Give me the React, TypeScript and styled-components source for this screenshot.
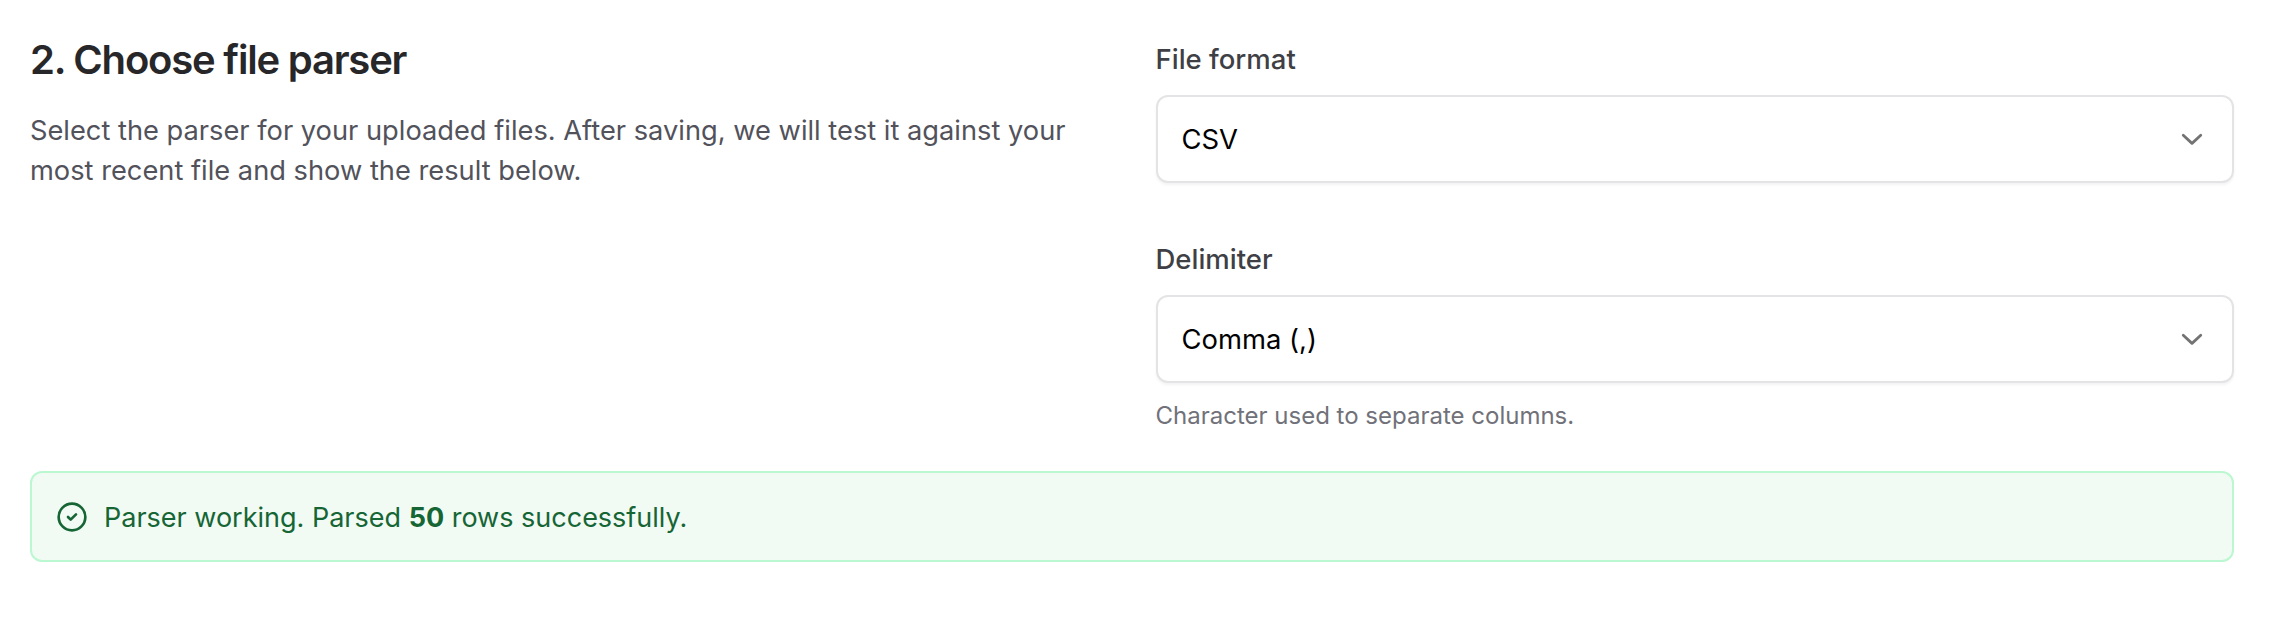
import React from 'react'
import styled, { createGlobalStyle } from 'styled-components'

const GlobalStyle = createGlobalStyle`
  html, body {
    margin: 0;
    background: #ffffff;
    font-family: Inter, "Liberation Sans", sans-serif;
  }
`

const Page = styled.div`
  padding: 40px 40px 0 30px;
  width: 2274px;
  height: 618px;
  box-sizing: border-box;
  overflow: hidden;
`

const Columns = styled.div`
  display: grid;
  grid-template-columns: 1fr 1fr;
  gap: 47px;
`

const Title = styled.h2`
  margin: 0 0 32px;
  padding-top: 1px;
  font-size: 40px;
  line-height: 38px;
  font-weight: 600;
  letter-spacing: -1.2px;
  color: #27272a;
`

const Description = styled.p`
  margin: 0;
  font-size: 27.25px;
  line-height: 40px;
  color: #52525b;
`

const Fields = styled.div`
  display: flex;
  flex-direction: column;
  gap: 57px;
`

const Field = styled.div`
  display: flex;
  flex-direction: column;
`

const Label = styled.label`
  font-size: 27.5px;
  line-height: 39px;
  font-weight: 500;
  color: #3f3f46;
  margin-bottom: 16px;
`

const Select = styled.div`
  display: flex;
  align-items: center;
  justify-content: space-between;
  height: 88px;
  box-sizing: border-box;
  padding: 0 25px 0 24px;
  border: 2px solid #e4e4e7;
  border-radius: 12px;
  box-shadow: 0 2px 3px rgba(0, 0, 0, 0.05);
  background: #ffffff;
  font-size: 27.4px;
  color: #000000;
`

const Hint = styled.p`
  margin: 17px 0 0;
  font-size: 24px;
  line-height: 32px;
  color: #71717a;
`

const Notice = styled.div`
  display: flex;
  align-items: center;
  gap: 16px;
  height: 91px;
  box-sizing: border-box;
  margin-top: 39px;
  padding: 0 24px;
  background: #f1fbf4;
  border: 2px solid #bbf7d0;
  border-radius: 12px;
  font-size: 27px;
  color: #166534;

  strong {
    font-weight: 700;
  }
`

const NoticeText = styled.span`
  padding-top: 1px;
`

const Chevron = () => (
  <svg width="30" height="30" viewBox="0 0 24 24" fill="none" stroke="#737373" strokeWidth="2.2" strokeLinecap="round" strokeLinejoin="round">
    <path d="m5 9 7 6.5 7-6.5" />
  </svg>
)

const CircleCheck = () => (
  <svg width="32" height="32" viewBox="0 0 24 24" fill="none" stroke="#166534" strokeWidth="2" strokeLinecap="round" strokeLinejoin="round">
    <circle cx="12" cy="12" r="10" />
    <path d="m9 12 2 2 4-4" />
  </svg>
)

export default function App() {
  return (
    <Page>
      <GlobalStyle />
      <Columns>
        <div>
          <Title>2. Choose file parser</Title>
          <Description>
            Select the parser for your uploaded files. After saving, we will test it against your most recent file and
            show the result below.
          </Description>
        </div>
        <Fields>
          <Field>
            <Label>File format</Label>
            <Select>
              CSV
              <Chevron />
            </Select>
          </Field>
          <Field>
            <Label>Delimiter</Label>
            <Select>
              Comma (,)
              <Chevron />
            </Select>
            <Hint>Character used to separate columns.</Hint>
          </Field>
        </Fields>
      </Columns>
      <Notice>
        <CircleCheck />
        <NoticeText>
          Parser working. Parsed <strong>50</strong> rows successfully.
        </NoticeText>
      </Notice>
    </Page>
  )
}
